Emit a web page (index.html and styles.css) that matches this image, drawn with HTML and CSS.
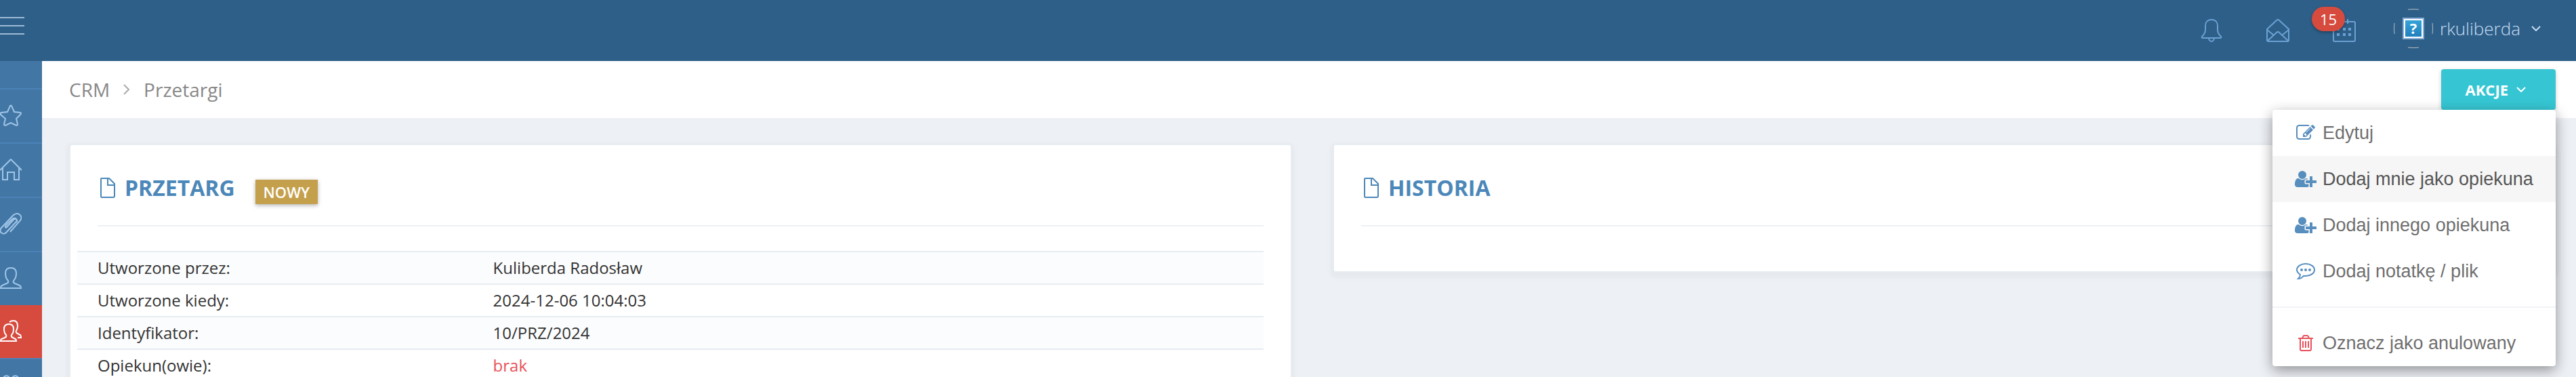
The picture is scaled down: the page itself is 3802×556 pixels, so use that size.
FILE: index.html
```html
<!DOCTYPE html>
<html lang="pl">
<head>
  <meta charset="UTF-8">
  <meta name="viewport" content="width=device-width, initial-scale=1.0">
  <title>CRM - Przetargi</title>
  <link rel="stylesheet" href="styles.css">
</head>
<body>
  <header class="topbar">
    <button class="menu-toggle" type="button" aria-label="Menu">
      <svg width="36" height="26" viewBox="0 0 36 26"><path d="M0 1h36M0 13h36M0 25h36"/></svg>
    </button>
    <nav class="top-menu">
      <a href="#" class="top-icon" aria-label="Powiadomienia">
        <svg width="34" height="34" viewBox="0 0 34 34"><path d="M17 1c-6 0-9 4-9 9v6c0 4-1 6-5 10-1 1 0 2 1 2h26c1 0 2-1 1-2-4-4-5-6-5-10v-6c0-5-3-9-9-9zM13 28c0 3 2 5 4 5s4-2 4-5"/></svg>
      </a>
      <a href="#" class="top-icon" aria-label="Wiadomości">
        <svg width="34" height="34" viewBox="0 0 34 34"><path d="M1 15 15 2q2-2 4 0l14 13v16q0 2-2 2H3q-2 0-2-2zM1 16l10 8M33 16l-10 8M2 32l13-12q2-2 4 0l13 12"/></svg>
      </a>
      <a href="#" class="top-icon" aria-label="Kalendarz">
        <svg width="34" height="34" viewBox="0 0 34 34"><path d="M3 4h28q2 0 2 2v25q0 2-2 2H3q-2 0-2-2V6q0-2 2-2zM12 0v7M22 0v7"/><path class="dots" d="M6 13h4v4H6zM15 13h4v4h-4zM23 13h4v4h-4zM6 21h4v4H6zM15 21h4v4h-4zM23 21h4v4h-4z"/></svg>
        <span class="count">15</span>
      </a>
      <a href="#" class="user">
        <svg class="avatar" width="58" height="58" viewBox="0 0 58 58">
          <defs>
            <linearGradient id="avatarFill" x1="0" y1="0" x2="0" y2="1">
              <stop offset="0" stop-color="#35a3d8"/>
              <stop offset="1" stop-color="#217fbd"/>
            </linearGradient>
          </defs>
          <path d="M21 1q8-1 16 0M21 57q8 1 16 0M1 21q-1 8 0 16M57 21q1 8 0 16" fill="none" stroke="#b7bcc0"/>
          <rect x="13" y="13" width="32" height="32" fill="#86aed6"/>
          <rect x="15" y="15" width="28" height="28" fill="#fff"/>
          <rect x="17" y="17" width="24" height="24" fill="url(#avatarFill)"/>
          <text x="29" y="37" text-anchor="middle">?</text>
        </svg>
        <span>rkuliberda</span>
        <svg class="chevron" width="14" height="8" viewBox="0 0 14 8"><path d="M1 1l6 6 6-6"/></svg>
      </a>
    </nav>
  </header>

  <div class="layout">
    <nav class="sidebar">
      <a href="#" aria-label="Ulubione"><svg width="32" height="32" viewBox="0 0 32 32"><path d="M15 2q1-1 2 0l4 9 9 1q2 1 0 3l-6 6 2 8q0 2-2 2l-8-4-8 4q-2 0-2-2l2-8-7-6q-1-2 1-3l9-1z"/></svg></a>
      <a href="#" aria-label="Start"><svg width="32" height="32" viewBox="0 0 32 32"><path d="M0 17 16 1l16 16M4 14v17h7V20h10v11h7V14"/></svg></a>
      <a href="#" aria-label="Załączniki"><svg width="32" height="32" viewBox="0 0 32 32"><path d="M9 22 20 10c3-3 6 0 4 3L10 28c-5 6-13 0-8-6L19 4c6-7 16 0 11 7L15 28M9 22c-2-1-1-3 0-4L18 9c5-3 9 1 6 5"/></svg></a>
      <a href="#" aria-label="Kontakt"><svg width="32" height="32" viewBox="0 0 32 32"><path d="M16 1c-5 0-8 3-8 8 0 5 1 8 4 11 1 2 0 3-2 4l-7 3c-2 1-2 2-2 4h30c0-2 0-3-2-4l-7-3c-2-1-3-2-2-4 3-3 4-6 4-11 0-5-3-8-8-8z"/></svg></a>
      <a href="#" class="active" aria-label="CRM"><svg width="32" height="32" viewBox="0 0 32 32"><path d="M13 6c-5 0-7 3-7 7s1 7 3 9c1 2 0 3-2 4l-5 2c-1 1-1 2-1 3h23c0-1 0-2-1-3l-4-2c-2-1-3-2-2-4 2-2 3-5 3-9s-2-7-7-7zM14 3c2-2 4-2 6-2 5 0 6 4 6 8 0 3-1 5-2 7-1 1 0 3 2 4l4 2c1 1 1 2 1 4h-5"/></svg></a>
      <a href="#" aria-label="Projekty"><svg width="32" height="32" viewBox="0 0 32 32"><path d="M5 6c1-5 8-5 9 0M18 6c1-5 8-5 9 0M2 10h28v20H2z"/></svg></a>
    </nav>

    <main class="content">
      <div class="page-bar">
        <nav class="breadcrumb">
          <a href="#">CRM</a>
          <svg width="10" height="16" viewBox="0 0 10 16"><path d="M1 1l7 7-7 7"/></svg>
          <a href="#">Przetargi</a>
        </nav>
        <div class="actions">
          <button class="btn-actions" type="button" aria-haspopup="true" aria-expanded="true">
            AKCJE
            <svg class="chevron" width="14" height="8" viewBox="0 0 14 8"><path d="M1 1l6 6 6-6"/></svg>
          </button>
          <ul class="dropdown">
            <li><a href="#">
              <span class="icon"><svg width="28" height="28" viewBox="0 0 1792 1792"><path d="M888 1184l116-116-152-152-116 116v56h96v96h56zm440-720q-16-16-33 1l-350 350q-17 17-1 33t33-1l350-350q17-17 1-33zm80 594v190q0 119-84.5 203.5t-203.5 84.5h-832q-119 0-203.5-84.5t-84.5-203.5v-832q0-119 84.5-203.5t203.5-84.5h832q63 0 117 25 15 7 18 23 3 17-9 29l-49 49q-14 14-32 8-23-6-45-6h-832q-66 0-113 47t-47 113v832q0 66 47 113t113 47h832q66 0 113-47t47-113v-126q0-13 9-22l64-64q15-15 35-7t20 29zm-96-738l288 288-672 672h-288v-288zm444 132l-92 92-288-288 92-92q28-28 68-28t68 28l152 152q28 28 28 68t-28 68z"/></svg></span>
              Edytuj
            </a></li>
            <li><a href="#" class="hover">
              <span class="icon"><svg width="32" height="28" viewBox="0 0 2048 1792"><path d="M704 896q-159 0-271.5-112.5t-112.5-271.5 112.5-271.5 271.5-112.5 271.5 112.5 112.5 271.5-112.5 271.5-271.5 112.5zm960 128h352q13 0 22.5 9.5t9.5 22.5v192q0 13-9.5 22.5t-22.5 9.5h-352v352q0 13-9.5 22.5t-22.5 9.5h-192q-13 0-22.5-9.5t-9.5-22.5v-352h-352q-13 0-22.5-9.5t-9.5-22.5v-192q0-13 9.5-22.5t22.5-9.5h352v-352q0-13 9.5-22.5t22.5-9.5h192q13 0 22.5 9.5t9.5 22.5v352zm-736 224q0 52 38 90t90 38h256v238q-68 50-171 50h-874q-121 0-194-69t-73-190q0-53 3.5-103.5t14-109 26.5-108.5 43-97.5 62-81 85.5-53.5 111.5-20q19 0 39 17 79 61 154.5 91.5t164.5 30.5 164.5-30.5 154.5-91.5q20-17 39-17 132 0 217 96h-223q-52 0-90 38t-38 90v192z"/></svg></span>
              Dodaj mnie jako opiekuna
            </a></li>
            <li><a href="#">
              <span class="icon"><svg width="32" height="28" viewBox="0 0 2048 1792"><path d="M704 896q-159 0-271.5-112.5t-112.5-271.5 112.5-271.5 271.5-112.5 271.5 112.5 112.5 271.5-112.5 271.5-271.5 112.5zm960 128h352q13 0 22.5 9.5t9.5 22.5v192q0 13-9.5 22.5t-22.5 9.5h-352v352q0 13-9.5 22.5t-22.5 9.5h-192q-13 0-22.5-9.5t-9.5-22.5v-352h-352q-13 0-22.5-9.5t-9.5-22.5v-192q0-13 9.5-22.5t22.5-9.5h352v-352q0-13 9.5-22.5t22.5-9.5h192q13 0 22.5 9.5t9.5 22.5v352zm-736 224q0 52 38 90t90 38h256v238q-68 50-171 50h-874q-121 0-194-69t-73-190q0-53 3.5-103.5t14-109 26.5-108.5 43-97.5 62-81 85.5-53.5 111.5-20q19 0 39 17 79 61 154.5 91.5t164.5 30.5 164.5-30.5 154.5-91.5q20-17 39-17 132 0 217 96h-223q-52 0-90 38t-38 90v192z"/></svg></span>
              Dodaj innego opiekuna
            </a></li>
            <li><a href="#">
              <span class="icon"><svg width="28" height="28" viewBox="0 0 28 28"><path class="line" d="M14 3c7 0 13 4 13 9s-6 9-13 9c-1 0-2 0-3-.2C9 23 6 25 3 25c2-2 3-4 3-6-3-2-5-4-5-7 0-5 6-9 13-9z"/><circle cx="8" cy="12" r="2"/><circle cx="14" cy="12" r="2"/><circle cx="20" cy="12" r="2"/></svg></span>
              Dodaj notatkę / plik
            </a></li>
            <li class="divider"></li>
            <li><a href="#">
              <span class="icon danger"><svg width="28" height="28" viewBox="0 0 1792 1792"><path d="M704 736v576q0 14-9 23t-23 9h-64q-14 0-23-9t-9-23v-576q0-14 9-23t23-9h64q14 0 23 9t9 23zm256 0v576q0 14-9 23t-23 9h-64q-14 0-23-9t-9-23v-576q0-14 9-23t23-9h64q14 0 23 9t9 23zm256 0v576q0 14-9 23t-23 9h-64q-14 0-23-9t-9-23v-576q0-14 9-23t23-9h64q14 0 23 9t9 23zm128 724v-948h-896v948q0 22 7 40.5t14.5 27 10.5 8.5h832q3 0 10.5-8.5t14.5-27 7-40.5zm-672-1076h448l-48-117q-7-9-17-11h-317q-10 2-17 11zm928 32v64q0 14-9 23t-23 9h-96v948q0 83-47 143.5t-113 60.5h-832q-66 0-113-58.5t-47-141.5v-952h-96q-14 0-23-9t-9-23v-64q0-14 9-23t23-9h309l70-167q15-37 54-63t79-26h320q40 0 79 26t54 63l70 167h309q14 0 23 9t9 23z"/></svg></span>
              Oznacz jako anulowany
            </a></li>
          </ul>
        </div>
      </div>

      <div class="cards">
        <section class="card">
          <div class="card-title">
            <svg width="30" height="30" viewBox="0 0 30 30"><path d="M6 1h11l8 8v18q0 2-2 2H6q-1 0-1-2V2q0-1 1-1zM15 1v10h10"/></svg>
            <h2>PRZETARG</h2>
            <span class="status">NOWY</span>
          </div>
          <div class="card-body">
            <table class="details">
              <tbody>
                <tr><th scope="row">Utworzone przez:</th><td>Kuliberda Radosław</td></tr>
                <tr><th scope="row">Utworzone kiedy:</th><td>2024-12-06 10:04:03</td></tr>
                <tr><th scope="row">Identyfikator:</th><td>10/PRZ/2024</td></tr>
                <tr><th scope="row">Opiekun(owie):</th><td class="missing">brak</td></tr>
              </tbody>
            </table>
          </div>
        </section>

        <section class="card">
          <div class="card-title">
            <svg width="30" height="30" viewBox="0 0 30 30"><path d="M6 1h11l8 8v18q0 2-2 2H6q-1 0-1-2V2q0-1 1-1zM15 1v10h10"/></svg>
            <h2>HISTORIA</h2>
          </div>
          <div class="card-body"></div>
        </section>
      </div>
    </main>
  </div>
</body>
</html>
```
FILE: styles.css
```css
:root {
  --topbar: #2e5f88;
  --sidebar: #4276a4;
  --sidebar-line: #4a82b8;
  --bg: #edf0f5;
  --blue: #4c87b9;
  --red: #d64b3e;
  --danger: #e7505a;
  --line: #e7ecf1;
}
* {
  box-sizing: border-box;
}
body {
  margin: 0;
  height: 100vh;
  overflow: hidden;
  display: flex;
  flex-direction: column;
  font-family: "Open Sans", sans-serif;
  font-size: 24px;
  color: #333;
  background: var(--bg);
}
a {
  color: inherit;
  text-decoration: none;
}
button {
  border: none;
  font-family: inherit;
  cursor: pointer;
}
svg {
  display: block;
  flex: none;
}

/* top bar */
.topbar {
  flex: none;
  height: 90px;
  display: flex;
  justify-content: space-between;
  padding-right: 52px;
  background: var(--topbar);
}
.menu-toggle {
  align-self: flex-start;
  padding: 25px 0 0;
  background: none;
}
.menu-toggle path {
  stroke: #9dbad6;
  stroke-width: 2;
}
.top-menu {
  display: flex;
  align-items: center;
  gap: 64px;
}
.top-icon {
  position: relative;
}
.top-icon path {
  fill: none;
  stroke: #6ba1d4;
  stroke-width: 2;
}
.top-icon .dots {
  fill: #6ba1d4;
  stroke: none;
}
.count {
  position: absolute;
  top: -18px;
  right: 16px;
  padding: 0 12px;
  border-radius: 18px;
  background: var(--red);
  color: #fff;
  font-size: 22px;
  line-height: 36px;
  box-shadow: 0 2px 4px rgba(0, 0, 0, .3);
}
.user {
  display: flex;
  align-items: center;
  gap: 10px;
  margin-left: -8px;
  padding-bottom: 6px;
  color: #c6dcf2;
  font-size: 26px;
  font-weight: 300;
}
.avatar text {
  font-size: 22px;
  font-weight: 700;
  fill: #fff;
}
.user .chevron {
  margin-left: 6px;
}
.chevron path {
  fill: none;
  stroke: currentColor;
  stroke-width: 2;
}

.layout {
  flex: 1;
  min-height: 0;
  display: flex;
}

/* sidebar */
.sidebar {
  flex: none;
  width: 62px;
  padding-top: 40px;
  background: var(--sidebar);
  color: #a0c5e8;
}
.sidebar a {
  display: block;
  padding: 22px 0 24px;
  border-top: 2px solid var(--sidebar-line);
}
.sidebar .active {
  border-top: none;
  background: var(--red);
  color: #fff;
}
.sidebar path {
  fill: none;
  stroke: currentColor;
  stroke-width: 2;
}

/* page bar */
.content {
  flex: 1;
  min-width: 0;
}
.page-bar {
  display: flex;
  justify-content: space-between;
  padding: 12px 30px 12px 40px;
  background: #fff;
}
.breadcrumb {
  display: flex;
  align-items: center;
  gap: 20px;
  font-size: 28px;
  color: #888;
}
.breadcrumb path {
  fill: none;
  stroke: #aaa;
  stroke-width: 2;
}
.actions {
  position: relative;
}
.btn-actions {
  display: flex;
  align-items: center;
  gap: 12px;
  height: 60px;
  padding: 0 44px 0 36px;
  border-radius: 4px;
  background: #36c6d3;
  color: #fff;
  font-size: 22px;
  font-weight: 700;
  box-shadow: 0 2px 6px rgba(0, 0, 0, .2);
}
.dropdown {
  position: absolute;
  top: 100%;
  right: 0;
  z-index: 10;
  width: 418px;
  margin: 0;
  padding: 0;
  list-style: none;
  border-radius: 4px;
  background: #fff;
  color: #6f6f6f;
  font-family: "Liberation Sans", sans-serif;
  font-size: 27px;
  line-height: 36px;
  white-space: nowrap;
  box-shadow: 0 6px 20px rgba(0, 0, 0, .4);
}
.dropdown a {
  display: flex;
  align-items: center;
  gap: 8px;
  padding: 16px 32px;
}
.dropdown a:hover,
.dropdown .hover {
  background: #f6f6f6;
  color: #555;
}
.dropdown .divider {
  height: 2px;
  margin: 18px 0;
  background: #f1f3f6;
}
.icon {
  display: flex;
  justify-content: center;
  width: 34px;
  fill: #578ebe;
}
.icon .line {
  fill: none;
  stroke: #578ebe;
  stroke-width: 2;
}
.icon.danger {
  fill: var(--danger);
}

/* cards */
.cards {
  display: grid;
  grid-template-columns: 1fr 1fr;
  align-items: start;
  gap: 60px;
  padding: 38px 30px 0 40px;
}
.card {
  border: 2px solid var(--line);
  border-radius: 4px;
  background: #fff;
  box-shadow: 0 4px 6px 4px rgba(0, 0, 0, .03);
}
.card-title {
  display: flex;
  align-items: center;
  gap: 10px;
  margin: 0 40px;
  padding: 38px 0 30px;
  border-bottom: 2px solid #eef1f5;
  color: var(--blue);
}
.card-title path {
  fill: none;
  stroke: currentColor;
  stroke-width: 2;
}
.card-title h2 {
  margin: 0;
  font-size: 32px;
  font-weight: 700;
  line-height: 50px;
}
.status {
  margin: 12px 0 0 20px;
  padding: 0 12px;
  background: #c5a04c;
  color: #fff;
  font-size: 22px;
  font-weight: 600;
  line-height: 36px;
  box-shadow: 0 2px 6px rgba(0, 0, 0, .3);
}
.card-body {
  padding: 36px 40px 30px 10px;
}
.details {
  width: 100%;
  table-layout: fixed;
  border-collapse: collapse;
}
.details th,
.details td {
  padding: 0 30px;
  border-top: 2px solid var(--line);
  font-weight: 400;
  line-height: 46px;
  text-align: left;
}
.details th {
  width: 33.33%;
}
.details tr:nth-child(odd) {
  background: #fbfcfd;
}
.details .missing {
  color: var(--danger);
}
```
